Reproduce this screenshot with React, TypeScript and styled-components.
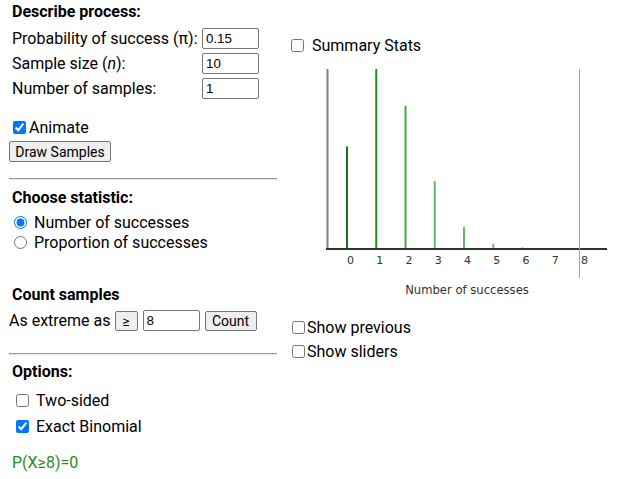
import React from "react";
import styled, { createGlobalStyle } from "styled-components";

const Global = createGlobalStyle`
  html, body { margin: 0; padding: 0; background: #fff; }
  body { font-family: Roboto, "Liberation Sans", Arial, sans-serif; font-size: 16px; color: #000; }
`;

const Page = styled.div`
  display: flex;
  align-items: flex-start;
  gap: 11px;
  padding: 2px 0 0 9px;
`;

const LeftCol = styled.div`
  width: 268px;
  display: flex;
  flex-direction: column;
`;

const RightCol = styled.div`
  width: 329px;
  display: flex;
  flex-direction: column;
  padding-top: 33px;
`;

const Title = styled.div<{ $mt?: number }>`
  font-weight: 700;
  line-height: 19px;
  height: 19px;
  padding-left: 3px;
  margin-top: ${(p) => p.$mt ?? 0}px;
`;

const ParamGrid = styled.div`
  display: grid;
  grid-template-columns: 190px 57px;
  grid-auto-rows: 25px;
  align-items: center;
  margin-top: 5px;
  padding-left: 3px;
`;

const ParamLabel = styled.span`
  line-height: 25px;
  white-space: nowrap;
`;

const TextInput = styled.input<{ $w?: number }>`
  box-sizing: border-box;
  width: ${(p) => p.$w ?? 57}px;
  height: 21px;
  margin: 0;
  padding: 1px 3px;
  border: 1px solid #767676;
  border-radius: 2px;
  font-family: "Liberation Sans", Arial, sans-serif;
  font-size: 13.33px;
  color: #000;
  background: #fff;
`;

const CheckRow = styled.label<{ $mt?: number; $h?: number }>`
  display: flex;
  align-items: center;
  height: ${(p) => p.$h ?? 19}px;
  line-height: 19px;
  margin-top: ${(p) => p.$mt ?? 0}px;
  white-space: nowrap;
`;

const Box = styled.input<{ $ml?: number; $mr?: number }>`
  width: 13px;
  height: 13px;
  margin: 0 ${(p) => p.$mr ?? 3}px 0 ${(p) => p.$ml ?? 4}px;
  accent-color: #0075ff;
  flex: none;
`;

const ButtonWrap = styled.div<{ $mt: number }>`
  margin-top: ${(p) => p.$mt}px;
`;

const PlainButton = styled.button<{ $w: number; $h?: number; $px?: number }>`
  box-sizing: border-box;
  width: ${(p) => p.$w}px;
  height: ${(p) => p.$h ?? 21}px;
  margin: 0;
  padding: 0 ${(p) => p.$px ?? 4}px;
  border: 1px solid #767676;
  border-radius: 2px;
  background: #efefef;
  font-family: Roboto, "Liberation Sans", Arial, sans-serif;
  font-size: 14px;
  color: #000;
  line-height: 18px;
`;

const Rule = styled.hr<{ $mt: number }>`
  width: 268px;
  margin: ${(p) => p.$mt}px 0 0 0;
  height: 0;
  border: none;
  border-top: 1px solid #9a9a9a;
  border-bottom: 1px solid #e6e6e6;
`;

const ExtremeRow = styled.div`
  display: flex;
  align-items: center;
  height: 21px;
  margin-top: 6px;
  white-space: nowrap;
`;

const ExtremeText = styled.span`
  margin-right: 4px;
  line-height: 21px;
`;

const Spacer = styled.span<{ $w: number }>`
  display: inline-block;
  width: ${(p) => p.$w}px;
`;

const Result = styled.div`
  color: #2a8a22;
  line-height: 19px;
  padding-left: 3px;
  margin-top: 14px;
`;

const Chart = styled.svg`
  display: block;
  margin-top: 5px;
  overflow: visible;
`;

const probs = (() => {
  const n = 10;
  const p = 0.15;
  const out: number[] = [];
  let c = 1;
  for (let k = 0; k <= n; k++) {
    if (k > 0) c = (c * (n - k + 1)) / k;
    out.push(c * Math.pow(p, k) * Math.pow(1 - p, n - k));
  }
  return out;
})();

const barColors = ["#1f6e1f", "#17901a", "#45a845", "#62b862", "#62b862", "#72c172", "#8acc8a", "#8acc8a", "#8acc8a"];

function BinomChart() {
  const max = Math.max(...probs);
  const base = 188;
  const full = 179;
  const x0 = 59;
  const step = 29.25;
  return (
    <Chart width={329} height={240} viewBox="0 0 329 240">
      {probs.slice(0, 9).map((p, k) => {
        const h = (p / max) * full;
        if (h < 0.3) return null;
        const x = x0 + step * k;
        return <line key={k} x1={x} x2={x} y1={base} y2={base - h} stroke={barColors[k]} strokeWidth={2} />;
      })}
      <line x1={39.5} x2={39.5} y1={9} y2={189} stroke="#808080" strokeWidth={2} />
      <line x1={38} x2={319} y1={189} y2={189} stroke="#333" strokeWidth={2} />
      <line x1={291.5} x2={291.5} y1={9} y2={218} stroke="#e08a8a" strokeWidth={1} />
      {Array.from({ length: 9 }, (_, k) => (
        <text
          key={k}
          x={x0 + step * k + 3.5}
          y={204}
          textAnchor="middle"
          fontFamily="'DejaVu Sans', Verdana, sans-serif"
          fontSize={11}
          fill="#333"
        >
          {k}
        </text>
      ))}
      <text
        x={179}
        y={234}
        textAnchor="middle"
        fontFamily="'DejaVu Sans', Verdana, sans-serif"
        fontSize={11.6}
        fill="#333"
      >
        Number of successes
      </text>
    </Chart>
  );
}

export default function App() {
  return (
    <>
      <Global />
      <Page>
        <LeftCol>
          <Title>Describe process:</Title>
          <ParamGrid>
            <ParamLabel>Probability of success (π):</ParamLabel>
            <TextInput defaultValue="0.15" />
            <ParamLabel>
              Sample size (<i>n</i>):
            </ParamLabel>
            <TextInput defaultValue="10" />
            <ParamLabel>Number of samples:</ParamLabel>
            <TextInput defaultValue="1" />
          </ParamGrid>
          <CheckRow $mt={17}>
            <Box type="checkbox" defaultChecked />
            Animate
          </CheckRow>
          <ButtonWrap $mt={4}>
            <PlainButton $w={102}>Draw Samples</PlainButton>
          </ButtonWrap>
          <Rule $mt={16} />
          <Title $mt={8}>Choose statistic:</Title>
          <CheckRow $mt={5} $h={20}>
            <Box type="radio" name="stat" defaultChecked $ml={5} $mr={7} />
            Number of successes
          </CheckRow>
          <CheckRow $h={20}>
            <Box type="radio" name="stat" $ml={5} $mr={7} />
            Proportion of successes
          </CheckRow>
          <Title $mt={33}>Count samples</Title>
          <ExtremeRow>
            <ExtremeText>As extreme as</ExtremeText>
            <PlainButton $w={23} $h={20} $px={0}>≥</PlainButton>
            <Spacer $w={5} />
            <TextInput defaultValue="8" />
            <Spacer $w={5} />
            <PlainButton $w={52} $h={20}>Count</PlainButton>
          </ExtremeRow>
          <Rule $mt={22} />
          <Title $mt={7}>Options:</Title>
          <CheckRow $mt={6} $h={26}>
            <Box type="checkbox" $ml={7} $mr={7} />
            Two-sided
          </CheckRow>
          <CheckRow $h={26}>
            <Box type="checkbox" defaultChecked $ml={7} $mr={7} />
            Exact Binomial
          </CheckRow>
          <Result>P(X≥8)=0</Result>
        </LeftCol>
        <RightCol>
          <CheckRow $h={20}>
            <Box type="checkbox" $ml={3} $mr={8} />
            Summary Stats
          </CheckRow>
          <BinomChart />
          <CheckRow $mt={15} $h={24}>
            <Box type="checkbox" $ml={4} $mr={2} />
            Show previous
          </CheckRow>
          <CheckRow $h={24}>
            <Box type="checkbox" $ml={4} $mr={2} />
            Show sliders
          </CheckRow>
        </RightCol>
      </Page>
    </>
  );
}
